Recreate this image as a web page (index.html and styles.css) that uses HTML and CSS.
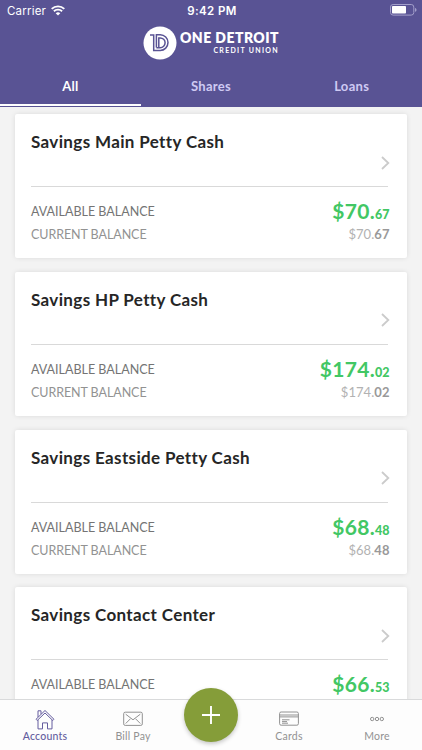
FILE: index.html
```html
<!DOCTYPE html>
<html lang="en">
<head>
<meta charset="utf-8">
<meta name="viewport" content="width=device-width">
<title>Accounts</title>
<link rel="stylesheet" href="styles.css">
</head>
<body>
<div class="app">
  <header class="header">
    <div class="status">
      <div class="status-left"><span class="carrier">Carrier</span>
        <svg class="wifi" width="14" height="11" viewBox="0 0 14 11" fill="none" stroke="#fff" stroke-width="1.9"><path d="M.7 3.9a9 9 0 0 1 12.6 0M2.900 6.300a5.900 5.900 0 0 1 8.200 0"/><path d="M4.700 8.300a3.300 3.300 0 0 1 4.600 0L7 10.600z" fill="#fff" stroke="none"/></svg>
      </div>
      <div class="time">9:42 PM</div>
      <svg class="battery" width="27" height="12" viewBox="0 0 27 12"><rect x=".5" y=".5" width="23.300" height="10.600" rx="2.600" fill="none" stroke="#a39fca"/><rect x="2" y="2" width="14" height="7.600" rx=".8" fill="#fff"/><path d="M25 4v3.800c1-.4 1.500-1 1.500-1.900S26 4.400 25 4z" fill="#a39fca"/></svg>
    </div>
    <div class="brand">
      <svg width="34" height="34" viewBox="0 0 34 34"><circle cx="17" cy="17" r="16.500" fill="#fff"/><g fill="none" stroke="#595394" stroke-width="1.500"><path d="M7 9h3.700v15.400h6.500a7.800 7.800 0 0 0 0-15.600H13.400v12.800"/><path d="M13.400 21.700h3.800a4.900 4.900 0 0 0 0-9.800h-1.400v9.800"/></g></svg>
      <div class="wordmark"><span class="name">ONE DETROIT</span><span class="sub">CREDIT UNION</span></div>
    </div>
    <nav class="tabs"><a class="tab active">All</a><a class="tab">Shares</a><a class="tab">Loans</a></nav>
  </header>
  <main class="list">
    <section class="card">
      <div class="card-head"><h2>Savings Main Petty Cash</h2><svg class="chev" width="9" height="14" viewBox="0 0 9 14"><path d="M1 1l6.300 6L1 13"/></svg></div>
      <div class="row avail"><span class="label">AVAILABLE BALANCE</span><span class="amount">$70.<b>67</b></span></div>
      <div class="row current"><span class="label">CURRENT BALANCE</span><span class="amount">$70.<b>67</b></span></div>
    </section>
    <section class="card">
      <div class="card-head"><h2>Savings HP Petty Cash</h2><svg class="chev" width="9" height="14" viewBox="0 0 9 14"><path d="M1 1l6.300 6L1 13"/></svg></div>
      <div class="row avail"><span class="label">AVAILABLE BALANCE</span><span class="amount">$174.<b>02</b></span></div>
      <div class="row current"><span class="label">CURRENT BALANCE</span><span class="amount">$174.<b>02</b></span></div>
    </section>
    <section class="card">
      <div class="card-head"><h2>Savings Eastside Petty Cash</h2><svg class="chev" width="9" height="14" viewBox="0 0 9 14"><path d="M1 1l6.300 6L1 13"/></svg></div>
      <div class="row avail"><span class="label">AVAILABLE BALANCE</span><span class="amount">$68.<b>48</b></span></div>
      <div class="row current"><span class="label">CURRENT BALANCE</span><span class="amount">$68.<b>48</b></span></div>
    </section>
    <section class="card">
      <div class="card-head"><h2>Savings Contact Center</h2><svg class="chev" width="9" height="14" viewBox="0 0 9 14"><path d="M1 1l6.300 6L1 13"/></svg></div>
      <div class="row avail"><span class="label">AVAILABLE BALANCE</span><span class="amount">$66.<b>53</b></span></div>
    </section>
  </main>
  <footer class="bar">
    <a class="item on"><svg width="20" height="21" viewBox="0 0 20 21"><path d="M1 10.300L10 1.500l9 8.800-1.200 1.200L10 4l-7.800 7.500zM3 10.800v9.100h4.500v-6h5v6H17v-9.100M3 8V1.800h3v3.300"/></svg><span>Accounts</span></a>
    <a class="item"><svg width="20" height="21" viewBox="0 0 20 21"><rect x=".7" y="3.200" width="18.600" height="13.200" rx="1.500"/><path d="M2.700 5.200l7.300 5.600 7.300-5.600M2.700 14.500l4.800-4.800M17.300 14.500l-4.800-4.800"/></svg><span>Bill Pay</span></a>
    <div class="gap"></div>
    <a class="item"><svg width="20" height="21" viewBox="0 0 20 21"><rect x=".6" y="3" width="18.800" height="13.200" rx="1.500"/><path d="M.6 6h18.800M.6 7.900h18.800M3 10.800h7.500M3 12.600h5M3 14.200h6"/></svg><span>Cards</span></a>
    <a class="item"><svg width="20" height="21" viewBox="0 0 20 21"><circle cx="5.200" cy="10" r="1.700"/><circle cx="10" cy="10" r="1.700"/><circle cx="14.800" cy="10" r="1.700"/></svg><span>More</span></a>
    <div class="fab"><svg width="18" height="18" viewBox="0 0 18 18"><path d="M9 0v18M0 9h18"/></svg></div>
  </footer>
</div>
</body>
</html>
```
FILE: styles.css
```css
* { box-sizing: border-box; }
body { margin: 0; font-family: Lato, "Liberation Sans", sans-serif; }
.app { width: 422px; height: 750px; overflow: hidden; display: flex; flex-direction: column; background: #f3f3f3; }
.header { height: 107px; flex: none; background: #595394; color: #fff; display: flex; flex-direction: column; }
.status { height: 22px; display: grid; grid-template-columns: 1fr auto 1fr; padding: 0 5px 0 7px; font: 11.500px/22px Inter, sans-serif; }
.status-left { display: flex; gap: 5px; }
.carrier { letter-spacing: .2px; }
.wifi { margin-top: 5px; }
.time { font-weight: 600; letter-spacing: .4px; }
.battery { justify-self: end; margin-top: 4px; }
.brand { height: 43px; display: flex; gap: 3px; padding: 4px 0 0 143px; }
.wordmark { display: flex; flex-direction: column; width: 99px; margin-top: 4px; white-space: nowrap; }
.name { font-size: 14px; line-height: 16px; font-weight: 800; letter-spacing: .45px; }
.sub { font-size: 7px; line-height: 9px; font-weight: 700; letter-spacing: 1.300px; text-align: right; }
.tabs { display: flex; height: 42px; }
.tab { flex: 1; text-align: center; font-size: 13px; line-height: 42px; font-weight: 700; letter-spacing: .3px; color: #cfcaf3; }
.tab.active { color: #fff; height: 41px; border-bottom: 2px solid #fff; }
.list { flex: 1; min-height: 0; overflow: hidden; padding: 7px 15.500px 0 15px; display: flex; flex-direction: column; gap: 13.800px; }
.card { flex: none; height: 144px; background: #fff; border-radius: 2px; box-shadow: 0 0 5px rgba(0,0,0,.1); padding: 0 17px 0 16px; }
.card-head { height: 73px; margin-right: 2px; border-bottom: 1px solid #d9d9d9; display: flex; justify-content: space-between; }
h2 { margin: 17px 0 0; font-size: 17px; line-height: 22px; font-weight: 700; color: #262626; letter-spacing: .36px; white-space: nowrap; }
.chev { margin: 41.500px -2px 0 0; flex: none; fill: none; stroke: #cbcbcb; stroke-width: 1.800; }
.row { display: flex; justify-content: space-between; white-space: nowrap; }
.avail { height: 35px; line-height: 47px; }
.avail .label { line-height: 49px; }
.current { height: 24px; line-height: 24px; }
.label { font-size: 12.500px; color: #747474; }
.current .label { color: #929292; letter-spacing: -.07px; line-height: 26px; }
.avail .amount { font-size: 21px; font-weight: 700; color: #42c764; letter-spacing: .3px; }
.avail b { font-size: 12.500px; letter-spacing: 0; }
.current .amount { font-size: 13px; color: #b2b2b2; letter-spacing: .05px; }
.current b { color: #999; }
.bar { position: relative; z-index: 1; height: 51px; flex: none; background: #fdfdfd; border-top: 1px solid #d9dadb; display: grid; grid-template-columns: 90px 86px 70px 86px 90px; }
.item { display: flex; flex-direction: column; align-items: center; color: #929292; font-size: 10.500px; line-height: 13px; padding-top: 9px; letter-spacing: .2px; }
.item svg { fill: none; stroke: currentColor; stroke-width: 1; flex: none; }
.item.on { color: #655d9f; font-weight: 500; }
.fab { position: absolute; left: 184px; top: -12.500px; width: 54px; height: 54px; border-radius: 50%; background: #859d39; display: grid; place-items: center; box-shadow: 0 2px 4px rgba(0,0,0,.22); }
.fab svg { stroke: #fff; stroke-width: 1.900; }
```
